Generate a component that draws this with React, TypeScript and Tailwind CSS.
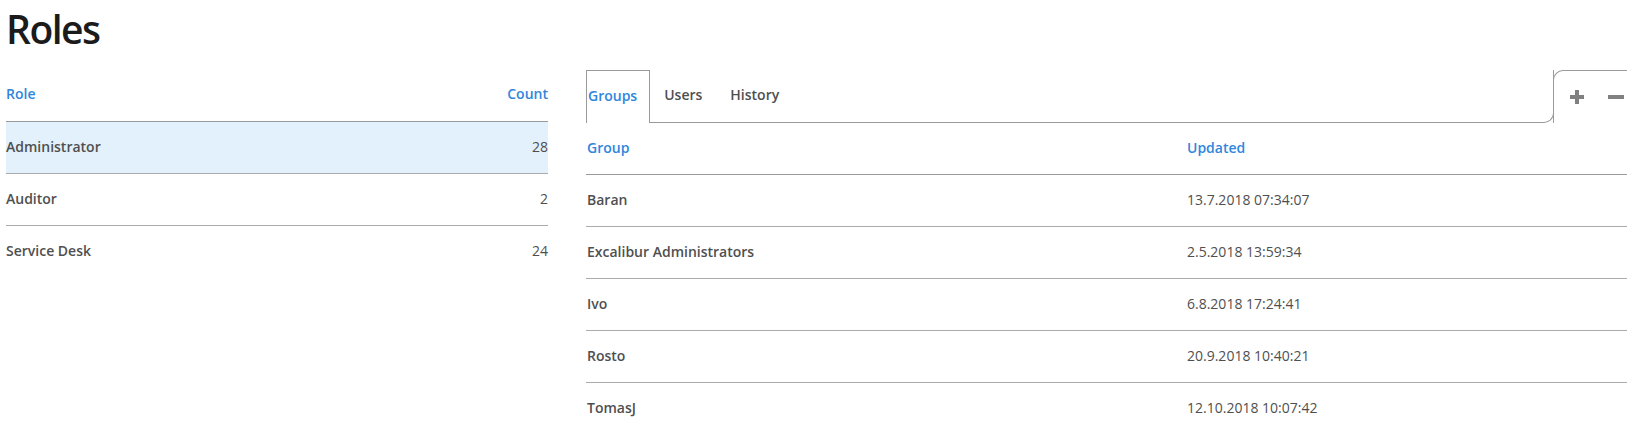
import React from 'react'

const roles = [
  { name: 'Administrator', count: 28, active: true },
  { name: 'Auditor', count: 2 },
  { name: 'Service Desk', count: 24 },
]

const groups = [
  { name: 'Baran', updated: '13.7.2018 07:34:07' },
  { name: 'Excalibur Administrators', updated: '2.5.2018 13:59:34' },
  { name: 'Ivo', updated: '6.8.2018 17:24:41' },
  { name: 'Rosto', updated: '20.9.2018 10:40:21' },
  { name: 'TomasJ', updated: '12.10.2018 10:07:42' },
]

export default function App() {
  return (
    <main className="min-h-screen bg-white pl-[6px] pr-[12px] text-[#555] font-['Open_Sans','Noto_Sans',sans-serif] text-[14px]">
      {/* title */}
      <h1 className="h-[70px] pt-[5px] text-[39px] leading-[48px] font-semibold tracking-[-1.5px] text-[#1b1b1b]">Roles</h1>

      <div className="flex gap-[38px]">
        {/* roles list */}
        <section className="w-[542px] shrink-0">
          <div className="h-[52px] pb-[4px] flex items-center justify-between border-b border-[#9a9a9a] font-semibold text-[#2f86dd]">
            <span>Role</span>
            <span>Count</span>
          </div>
          {roles.map((r, i) => (
            <div
              key={r.name}
              className={
                'h-[52px] pb-[3px] flex items-center justify-between ' +
                (i < roles.length - 1 ? 'border-b border-[#ababab] ' : '') +
                (r.active ? 'bg-[#e3f1fc]' : '')
              }
            >
              <span className="font-semibold text-[#4f4f4f]">{r.name}</span>
              <span className="text-[#4f4f4f]">{r.count}</span>
            </div>
          ))}
        </section>

        {/* detail panel */}
        <section className="flex-1 min-w-0">
          <div className="flex h-[53px]">
            <div className="flex items-center pb-[4px] pl-px pr-[12px] border-t border-l border-r border-[#9a9a9a] font-semibold text-[#2f86dd]">
              Groups
            </div>
            <div className="flex-1 flex items-center pb-[4px] border-b border-r border-[#9a9a9a] rounded-br-[10px] font-semibold text-[#4f4f4f]">
              <span className="px-[14px]">Users</span>
              <span className="px-[14px]">History</span>
            </div>
            <div className="w-[74px] -ml-px flex items-center justify-end gap-[23px] pr-[3px] border-t border-l border-[#9a9a9a] rounded-tl-[10px]">
              <svg width="16" height="16" viewBox="0 0 16 16" className="text-[#808080]">
                <path d="M8 1v14M1 8h14" stroke="currentColor" strokeWidth="4" />
              </svg>
              <svg width="16" height="16" viewBox="0 0 16 16" className="text-[#808080]">
                <path d="M0 8h16" stroke="currentColor" strokeWidth="4" />
              </svg>
            </div>
          </div>

          <div className="h-[52px] pb-[3px] flex items-center border-b border-[#9a9a9a] font-semibold text-[#2f86dd]">
            <span className="w-[601px] pl-px">Group</span>
            <span>Updated</span>
          </div>
          {groups.map(g => (
            <div key={g.name} className="h-[52px] pb-[3px] flex items-center border-b border-[#ababab]">
              <span className="w-[601px] pl-px font-semibold text-[#4f4f4f]">{g.name}</span>
              <span className="text-[#4f4f4f]">{g.updated}</span>
            </div>
          ))}
        </section>
      </div>
    </main>
  )
}
